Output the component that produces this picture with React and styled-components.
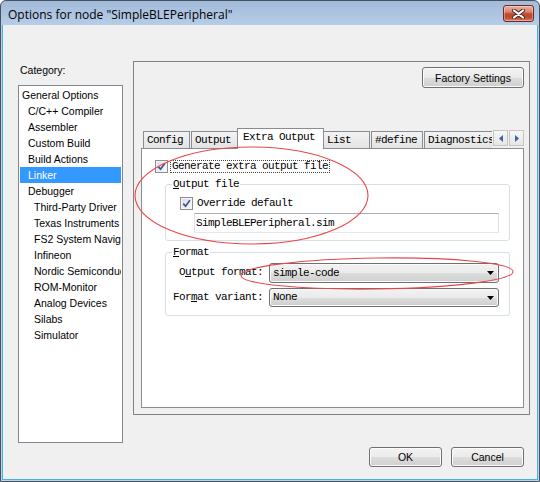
import React from 'react';
import styled, { createGlobalStyle } from 'styled-components';

const UI = `"Liberation Sans", Arial, sans-serif`;
const MONO = `"Liberation Mono", "Courier New", monospace`;
const TITLE = `"Open Sans", "Liberation Sans", sans-serif`;

const GlobalStyle = createGlobalStyle`
  html, body { margin: 0; padding: 0; background: #ffffff; }
  body { width: 540px; height: 482px; overflow: hidden; }
  *, *::before, *::after { box-sizing: border-box; }
`;

const Window = styled.div`
  position: relative;
  width: 540px;
  height: 482px;
  border: 1px solid #46525f;
  border-radius: 6px 6px 0 0;
  background: linear-gradient(#a2bbd9 0px, #b6cde7 24px, #bed3ea 60px, #bed3ea 100%);
  padding: 0 1px 1px;
  display: flex;
  flex-direction: column;
  overflow: hidden;
`;

const TitleBar = styled.div`
  height: 24px;
  flex: none;
  display: flex;
  align-items: flex-start;
  justify-content: space-between;
  padding: 0 4px 0 6px;
`;

const TitleText = styled.div`
  font: 12px ${TITLE};
  color: #000;
  line-height: 16px;
  margin-top: 6px;
  white-space: nowrap;
`;

const CloseButton = styled.div`
  width: 31px;
  height: 17px;
  margin-top: 4px;
  border: 1px solid #6b2b22;
  border-radius: 3px;
  background: linear-gradient(#eab0a2 0%, #d98570 40%, #c24a2f 52%, #c0472c 75%, #d7826a 100%);
  box-shadow: inset 0 0 0 1px rgba(255, 255, 255, 0.35);
  display: flex;
  align-items: center;
  justify-content: center;
`;

const Body = styled.div`
  flex: 1;
  background: #f0f0f0;
  border: 1px solid #44b3e4;
  border-top: none;
  display: flex;
  flex-direction: column;
  padding: 36px 7px 0 15px;
`;

const MainRow = styled.div`
  display: flex;
  align-items: flex-start;
  gap: 10px;
`;

const LeftColumn = styled.div`
  width: 105px;
  flex: none;
  padding-top: 3px;
  display: flex;
  flex-direction: column;
`;

const CategoryLabel = styled.div`
  font: 10.5px ${UI};
  line-height: 13px;
  color: #000;
  padding-left: 2px;
  margin-bottom: 8px;
`;

const CategoryList = styled.div`
  height: 358px;
  border: 1px solid #828790;
  background: #fff;
  padding: 1px;
  overflow: hidden;
`;

const ListItem = styled.div`
  height: 16px;
  line-height: 16px;
  font: 10.5px ${UI};
  line-height: 16px;
  white-space: nowrap;
  overflow: hidden;
  padding-left: ${(p) => 2 + p.$level * 6}px;
  background: ${(p) => (p.$selected ? '#3399ff' : 'transparent')};
  color: ${(p) => (p.$selected ? '#fff' : '#000')};
`;

const Frame = styled.div`
  width: 397px;
  height: 354px;
  flex: none;
  border: 1px solid #828282;
  display: flex;
  flex-direction: column;
  padding: 5px 5px 6px 7px;
`;

const Button = styled.div`
  width: ${(p) => p.$w}px;
  height: ${(p) => p.$h}px;
  flex: none;
  border: 1px solid #707070;
  border-radius: 3px;
  background: linear-gradient(#f2f2f2 0%, #ebebeb 50%, #dddddd 51%, #cfcfcf 100%);
  box-shadow: inset 0 0 0 1px #fbfbfb;
  font: 10.5px ${UI};
  color: #000;
  display: flex;
  align-items: center;
  justify-content: center;
`;

const FactoryButton = styled(Button)`
  align-self: flex-end;
`;

const TabControl = styled.div`
  margin-top: auto;
  display: flex;
  flex-direction: column;
`;

const TabStrip = styled.div`
  height: 20px;
  display: flex;
  align-items: flex-start;
`;

const TabsViewport = styled.div`
  width: 351px;
  height: 21px;
  flex: none;
  display: flex;
  align-items: flex-end;
  gap: 1px;
  padding-left: 2px;
  overflow: hidden;
  position: relative;
  z-index: 1;
`;

const Tab = styled.div`
  flex: none;
  width: ${(p) => p.$w}px;
  height: ${(p) => (p.$active ? 21 : 17)}px;
  margin: ${(p) => (p.$active ? '0 -2px 0 -2px' : '0 0 1px 0')};
  border: 1px solid #898c95;
  border-bottom: none;
  background: ${(p) => (p.$active ? '#ffffff' : 'linear-gradient(#f3f3f3, #e3e3e3)')};
  position: relative;
  z-index: ${(p) => (p.$active ? 1 : 0)};
  font: 11px ${MONO};
  letter-spacing: -0.6px;
  line-height: 13px;
  padding: 2px 0 0 ${(p) => (p.$active ? 5 : 3)}px;
  white-space: nowrap;
  color: #000;
`;

const ScrollButtons = styled.div`
  display: flex;
  gap: 1px;
  margin: 2px 0 0 1px;
`;

const ScrollButton = styled.div`
  width: 15px;
  height: 16px;
  border: 1px solid #c6c6c6;
  background: linear-gradient(#f7f7f7, #e5e5e5);
  display: flex;
  align-items: center;
  justify-content: center;
`;

const TabPage = styled.div`
  height: 260px;
  border: 1px solid #898c95;
  background: #fff;
  padding: 11px 13px 0 13px;
  display: flex;
  flex-direction: column;
  align-items: flex-start;
`;

const CheckRow = styled.div`
  height: 13px;
  display: flex;
  align-items: center;
  gap: ${(p) => p.$gap}px;
`;

const CheckBoxBox = styled.span`
  width: 13px;
  height: 13px;
  flex: none;
  border: 1px solid #8f8f8f;
  background: linear-gradient(135deg, #d8dadd, #fbfbfb);
  box-shadow: inset 0 0 0 1px #f4f4f4;
  display: flex;
  align-items: center;
  justify-content: center;
`;

const MonoText = styled.span`
  font: 11px ${MONO};
  letter-spacing: -0.6px;
  line-height: 13px;
  color: #000;
  white-space: nowrap;
`;

const FocusText = styled(MonoText)`
  border: 1px dotted #444;
  padding: 0 1px;
  line-height: 11px;
`;

const Group = styled.div`
  position: relative;
  width: 345px;
  height: ${(p) => p.$h}px;
  margin: 11px 0 0 10px;
  border: 1px solid #d5dfe5;
  border-radius: 3px;
  padding: ${(p) => p.$pad};
`;

const Legend = styled(MonoText)`
  position: absolute;
  top: -7px;
  left: 6px;
  background: #fff;
  padding: 0 1px;
`;

const TextBox = styled.div`
  width: 305px;
  height: 20px;
  margin: 3px 0 0 14px;
  border: 1px solid;
  border-color: #abadb3 #dbdfe6 #e3e9ef #e2e3ea;
  padding-left: 1px;
  display: flex;
  align-items: center;
`;

const FormatGrid = styled.div`
  display: grid;
  grid-template-columns: 90px 230px;
  grid-template-rows: 20px 19px;
  column-gap: 6px;
  row-gap: 5px;
`;

const FieldLabel = styled(MonoText)`
  align-self: center;
  text-align: right;
  margin-top: -1px;
`;

const Combo = styled.div`
  border: 1px solid #707070;
  border-radius: 3px;
  background: linear-gradient(#f2f2f2 0%, #ebebeb 50%, #dddddd 51%, #cfcfcf 100%);
  box-shadow: inset 0 0 0 1px #fafafa;
  display: flex;
  align-items: center;
  justify-content: space-between;
  padding: 0 4px 0 3px;
`;

const ButtonRow = styled.div`
  display: flex;
  justify-content: flex-end;
  gap: 9px;
  padding-right: 6px;
  margin-top: 4px;
`;

const Annotation = styled.svg`
  position: absolute;
  top: -1px;
  left: -1px;
  pointer-events: none;
  z-index: 5;
`;

const categories = [
  ['General Options', 0],
  ['C/C++ Compiler', 1],
  ['Assembler', 1],
  ['Custom Build', 1],
  ['Build Actions', 1],
  ['Linker', 1, true],
  ['Debugger', 1],
  ['Third-Party Driver', 2],
  ['Texas Instruments', 2],
  ['FS2 System Navigator', 2],
  ['Infineon', 2],
  ['Nordic Semiconductor', 2],
  ['ROM-Monitor', 2],
  ['Analog Devices', 2],
  ['Silabs', 2],
  ['Simulator', 2],
];

const tabs = [
  ['Config', 47],
  ['Output', 47],
  ['Extra Output', 87, true],
  ['List', 47],
  ['#define', 52],
  ['Diagnostics', 70],
];

const CheckMark = () => (
  <svg width="9" height="9" viewBox="0 0 9 9">
    <path d="M1.2 4.6 L3.6 7.2 L7.9 1.3" fill="none" stroke="#3d5496" strokeWidth="1.7" />
  </svg>
);

const CheckBox = () => (
  <CheckBoxBox>
    <CheckMark />
  </CheckBoxBox>
);

const DownArrow = () => (
  <svg width="7" height="4" viewBox="0 0 7 4">
    <path d="M0 0 H7 L3.5 4 Z" fill="#000" />
  </svg>
);

export default function App() {
  return (
    <>
      <GlobalStyle />
      <Window>
        <TitleBar>
          <TitleText>Options for node "SimpleBLEPeripheral"</TitleText>
          <CloseButton>
            <svg width="13" height="10" viewBox="0 0 13 10">
              <path d="M2 1.5 L11 8.5 M11 1.5 L2 8.5" stroke="#4a2a25" strokeWidth="4" strokeLinecap="round" />
              <path d="M2 1.5 L11 8.5 M11 1.5 L2 8.5" stroke="#ffffff" strokeWidth="2.2" strokeLinecap="round" />
            </svg>
          </CloseButton>
        </TitleBar>
        <Body>
          <MainRow>
            <LeftColumn>
              <CategoryLabel>Category:</CategoryLabel>
              <CategoryList>
                {categories.map(([name, level, sel]) => (
                  <ListItem key={name} $level={level} $selected={!!sel}>
                    {name}
                  </ListItem>
                ))}
              </CategoryList>
            </LeftColumn>
            <Frame>
              <FactoryButton $w={102} $h={21}>Factory Settings</FactoryButton>
              <TabControl>
                <TabStrip>
                  <TabsViewport>
                    {tabs.map(([label, w, active]) => (
                      <Tab key={label} $w={w} $active={!!active}>
                        {label}
                      </Tab>
                    ))}
                  </TabsViewport>
                  <ScrollButtons>
                    <ScrollButton>
                      <svg width="4" height="7" viewBox="0 0 4 7">
                        <path d="M4 0 V7 L0 3.5 Z" fill="#3f63a8" />
                      </svg>
                    </ScrollButton>
                    <ScrollButton>
                      <svg width="4" height="7" viewBox="0 0 4 7">
                        <path d="M0 0 V7 L4 3.5 Z" fill="#3f63a8" />
                      </svg>
                    </ScrollButton>
                  </ScrollButtons>
                </TabStrip>
                <TabPage>
                  <CheckRow $gap={2}>
                    <CheckBox />
                    <FocusText>Generate extra output file</FocusText>
                  </CheckRow>
                  <Group $h={57} $pad="12px 9px 7px 14px">
                    <Legend>
                      <u>O</u>utput file
                    </Legend>
                    <CheckRow $gap={4}>
                      <CheckBox />
                      <MonoText>Override default</MonoText>
                    </CheckRow>
                    <TextBox>
                      <MonoText>SimpleBLEPeripheral.sim</MonoText>
                    </TextBox>
                  </Group>
                  <Group $h={64} $pad="10px 9px 8px 7px">
                    <Legend>
                      <u>F</u>ormat
                    </Legend>
                    <FormatGrid>
                      <FieldLabel>
                        O<u>u</u>tput format:
                      </FieldLabel>
                      <Combo>
                        <MonoText>simple-code</MonoText>
                        <DownArrow />
                      </Combo>
                      <FieldLabel>
                        For<u>m</u>at variant:
                      </FieldLabel>
                      <Combo>
                        <MonoText>None</MonoText>
                        <DownArrow />
                      </Combo>
                    </FormatGrid>
                  </Group>
                </TabPage>
              </TabControl>
            </Frame>
          </MainRow>
          <ButtonRow>
            <Button $w={73} $h={20}>OK</Button>
            <Button $w={73} $h={20}>Cancel</Button>
          </ButtonRow>
        </Body>
        <Annotation width="540" height="482" viewBox="0 0 540 482">
          <ellipse cx="251.5" cy="195.5" rx="116.5" ry="48.5" fill="none" stroke="#e8474a" strokeWidth="1.1" />
          <ellipse
            cx="377"
            cy="273.5"
            rx="136"
            ry="15.5"
            fill="none"
            stroke="#e8474a"
            strokeWidth="1.1"
            transform="rotate(-0.8 377 273.5)"
          />
        </Annotation>
      </Window>
    </>
  );
}
